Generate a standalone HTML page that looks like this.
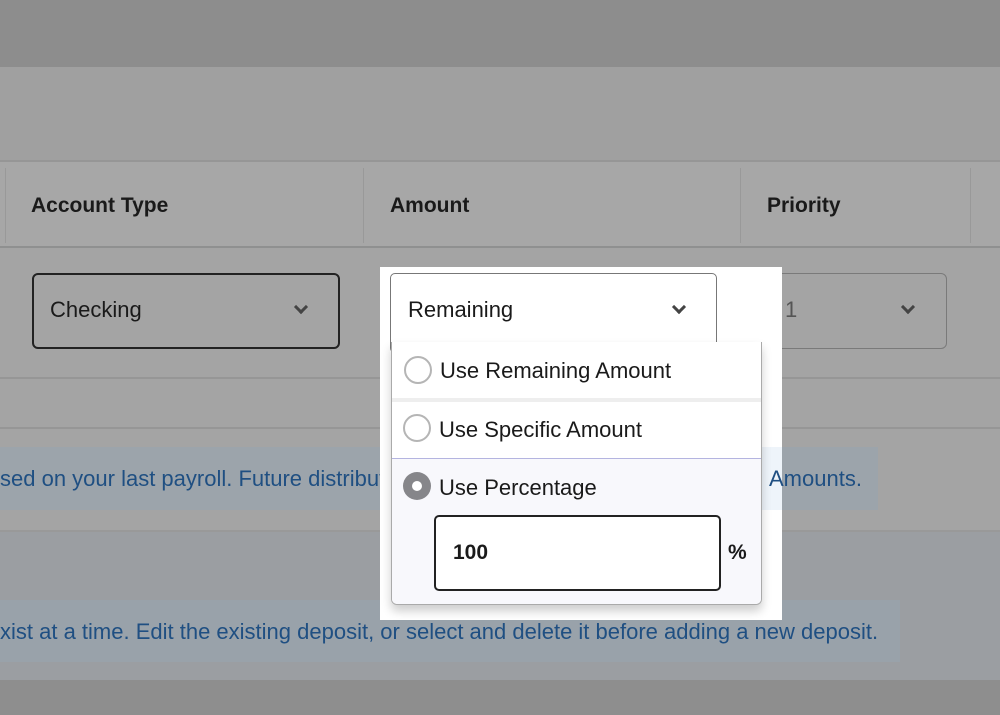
<!DOCTYPE html>
<html><head><style>
*{margin:0;padding:0;box-sizing:border-box}
body{width:1000px;height:715px;overflow:hidden;position:relative;font-family:"Liberation Sans",Arial,sans-serif;background:#a4a4a4}
.a{position:absolute}
.chev{position:absolute;width:10px;height:10px;border-right:3px solid #444;border-bottom:3px solid #444;transform:rotate(45deg)}
.radio{position:absolute;width:28px;height:28px;border-radius:50%;border:2px solid #b5b5b5;background:#fff}
.t{position:absolute;font-size:22px;color:#1a1a1a;white-space:nowrap}
.blue{position:absolute;font-size:22px;color:#1f4f82;white-space:nowrap}
</style></head><body>
<div class="a" style="left:0;top:0;width:1000px;height:67px;background:#8d8d8d"></div>
<div class="a" style="left:0;top:67px;width:1000px;height:93px;background:#a0a0a0"></div>
<div class="a" style="left:0;top:160px;width:1000px;height:2px;background:#969696"></div>
<div class="a" style="left:0;top:162px;width:1000px;height:85px;background:#a7a7a7"></div>
<div class="a" style="left:5px;top:168px;width:1px;height:75px;background:#999"></div>
<div class="a" style="left:363px;top:168px;width:1px;height:75px;background:#999"></div>
<div class="a" style="left:740px;top:168px;width:1px;height:75px;background:#999"></div>
<div class="a" style="left:970px;top:168px;width:1px;height:75px;background:#999"></div>
<div class="a" style="left:0;top:246px;width:1000px;height:2px;background:#8f9090"></div>
<div class="t" style="left:31px;top:194px;font-weight:bold;font-size:21px">Account Type</div>
<div class="t" style="left:390px;top:194px;font-weight:bold;font-size:21px">Amount</div>
<div class="t" style="left:767px;top:194px;font-weight:bold;font-size:21px">Priority</div>
<div class="a" style="left:0;top:377px;width:1000px;height:2px;background:#969696"></div>
<div class="a" style="left:0;top:427px;width:1000px;height:2px;background:#969696"></div>
<div class="a" style="left:0;top:447px;width:878px;height:63px;background:#9ca4ab"></div>
<div class="blue" style="left:0;top:466px">sed on your last payroll. Future distributions</div>
<div class="a" style="left:0;top:530px;width:1000px;height:2px;background:#999"></div>
<div class="a" style="left:0;top:532px;width:1000px;height:148px;background:#9b9ea2"></div>
<div class="a" style="left:0;top:600px;width:900px;height:62px;background:#99a2aa"></div>
<div class="blue" style="left:0;top:619px">xist at a time. Edit the existing deposit, or select and delete it before adding a new deposit.</div>
<div class="a" style="left:0;top:680px;width:1000px;height:35px;background:#8e8e8e"></div>
<!-- checking -->
<div class="a" style="left:32px;top:273px;width:308px;height:76px;border:2px solid #222;border-radius:6px"></div>
<div class="t" style="left:50px;top:297px">Checking</div>
<div class="chev" style="left:296px;top:302px"></div>
<!-- priority -->
<div class="a" style="left:768px;top:273px;width:179px;height:76px;border:1px solid #7a7a7a;border-radius:6px"></div>
<div class="t" style="left:785px;top:297px;color:#555">1</div>
<div class="chev" style="left:903px;top:302px"></div>
<!-- highlight -->
<div class="a" style="left:380px;top:267px;width:402px;height:353px;background:#fff"></div>
<div class="a" style="left:762px;top:447px;width:20px;height:63px;background:#eef4fa"></div>
<div class="blue" style="left:769px;top:466px">Amounts.</div>
<div class="a" style="left:390px;top:273px;width:327px;height:80px;border:1px solid #777;border-radius:5px"></div>
<div class="t" style="left:408px;top:297px">Remaining</div>
<div class="chev" style="left:674px;top:302px"></div>
<div class="a" style="left:391px;top:342px;width:371px;height:263px;background:#fff;border:1px solid #aaa;border-top:none;border-radius:0 0 6px 6px;box-shadow:0 6px 10px rgba(0,0,0,.2);overflow:hidden">
 <div class="a" style="left:0;top:56px;width:371px;height:4px;background:#eee"></div>
 <div class="a" style="left:0;top:116px;width:371px;height:147px;background:#f8f8fc;border-top:1px solid #b4b4e0"></div>
</div>
<div class="radio" style="left:404px;top:356px"></div>
<div class="t" style="left:440px;top:358px">Use Remaining Amount</div>
<div class="radio" style="left:403px;top:414px"></div>
<div class="t" style="left:439px;top:417px">Use Specific Amount</div>
<div class="a" style="left:403px;top:472px;width:28px;height:28px;border-radius:50%;background:#86868a"></div>
<div class="a" style="left:412px;top:481px;width:10px;height:10px;border-radius:50%;background:#fff"></div>
<div class="t" style="left:439px;top:475px">Use Percentage</div>
<div class="a" style="left:434px;top:515px;width:287px;height:76px;border:2px solid #222;border-radius:5px;background:#fff"></div>
<div class="t" style="left:453px;top:541px;font-weight:bold;font-size:21px">100</div>
<div class="t" style="left:728px;top:541px;font-weight:bold;font-size:21px">%</div>
</body></html>
